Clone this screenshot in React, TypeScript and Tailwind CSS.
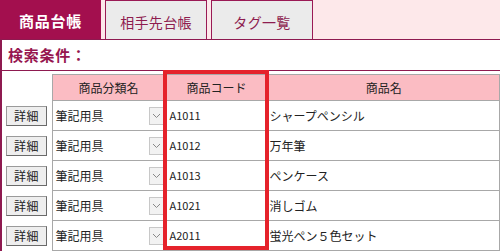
import { type JSX } from "react";

type Item = { category: string; code: string; name: string };

const ITEMS: Item[] = [
  { category: "筆記用具", code: "A1011", name: "シャープペンシル" },
  { category: "筆記用具", code: "A1012", name: "万年筆" },
  { category: "筆記用具", code: "A1013", name: "ペンケース" },
  { category: "筆記用具", code: "A1021", name: "消しゴム" },
  { category: "筆記用具", code: "A2011", name: "蛍光ペン５色セット" },
];

const FONT = "font-['Noto_Sans_CJK_JP','Noto_Sans',sans-serif]";

const Tab = ({ label, active }: { label: string; active?: boolean }): JSX.Element =>
  active ? (
    <div className="flex w-[101px] items-center justify-center bg-[#a30f4e] pt-1 text-[15px] font-bold tracking-wider text-white">
      {label}
    </div>
  ) : (
    <div className="ml-[4px] flex w-[102px] items-center justify-center border-x border-t border-[#9a1a55] bg-[#ebebeb] pt-1 text-[14px] tracking-wide text-[#8e1d4f]">
      {label}
    </div>
  );

const CategorySelect = ({ value }: { value: string }): JSX.Element => (
  <div className="flex items-center justify-between pl-[3px] pr-[1px]">
    <span>{value}</span>
    <span className="flex h-[18px] w-[15px] items-center justify-center border border-[#c8c8c8] bg-[#f2f2f2] text-[#777]">
      <svg width="9" height="6" viewBox="0 0 9 6" aria-hidden="true">
        <path d="M1 1 L4.5 4.5 L8 1" fill="none" stroke="#888" strokeWidth="1" />
      </svg>
    </span>
  </div>
);

export default function App(): JSX.Element {
  return (
    <div className={`relative h-[251px] w-[500px] overflow-hidden bg-white ${FONT}`}>
      <div className="flex h-[40px] border-b border-[#8e1a50] bg-[#fde8ea]">
        <Tab label="商品台帳" active />
        <Tab label="相手先台帳" />
        <Tab label="タグ一覧" />
      </div>

      <div className="border-l-2 border-[#8e1a50]">
        <div className="flex h-[31px] items-center border-b border-[#8e1a50] pl-[6px] text-[15px] font-bold tracking-wider text-[#96164f]">
          検索条件：
        </div>

        <table className="mt-[3px] w-[498px] border-collapse text-[12px] text-[#222]">
          <thead>
            <tr className="h-[26px]">
              <th className="w-[50px]" />
              <th className="w-[113px] border border-[#a8a8a8] bg-[#fbbcc3] font-normal">
                商品分類名
              </th>
              <th className="w-[103px] border border-[#a8a8a8] bg-[#fbbcc3] font-normal">
                商品コード
              </th>
              <th className="border border-[#a8a8a8] bg-[#fbbcc3] font-normal">商品名</th>
            </tr>
          </thead>
          <tbody>
            {ITEMS.map((item) => (
              <tr key={item.code} className="h-[30px]">
                <td className="pl-[4px]">
                  <button
                    type="button"
                    className="flex h-[20px] w-[41px] items-center justify-center border border-[#9a9a9a] border-b-[#6a6a6a] border-r-[#6a6a6a] bg-[#eeeeee] text-[12px] tracking-wider text-[#222]"
                  >
                    詳細
                  </button>
                </td>
                <td className="border border-[#a8a8a8]">
                  <CategorySelect value={item.category} />
                </td>
                <td className="border border-[#a8a8a8] pl-[4px] text-[11px]">{item.code}</td>
                <td className="border border-[#a8a8a8] pl-[1px]">{item.name}</td>
              </tr>
            ))}
          </tbody>
        </table>
      </div>

      {/* 強調枠：商品コード列を赤で囲む */}
      <div className="pointer-events-none absolute left-[163px] top-[70px] h-[180px] w-[106px] border-[4px] border-[#e5222b]" />
    </div>
  );
}
